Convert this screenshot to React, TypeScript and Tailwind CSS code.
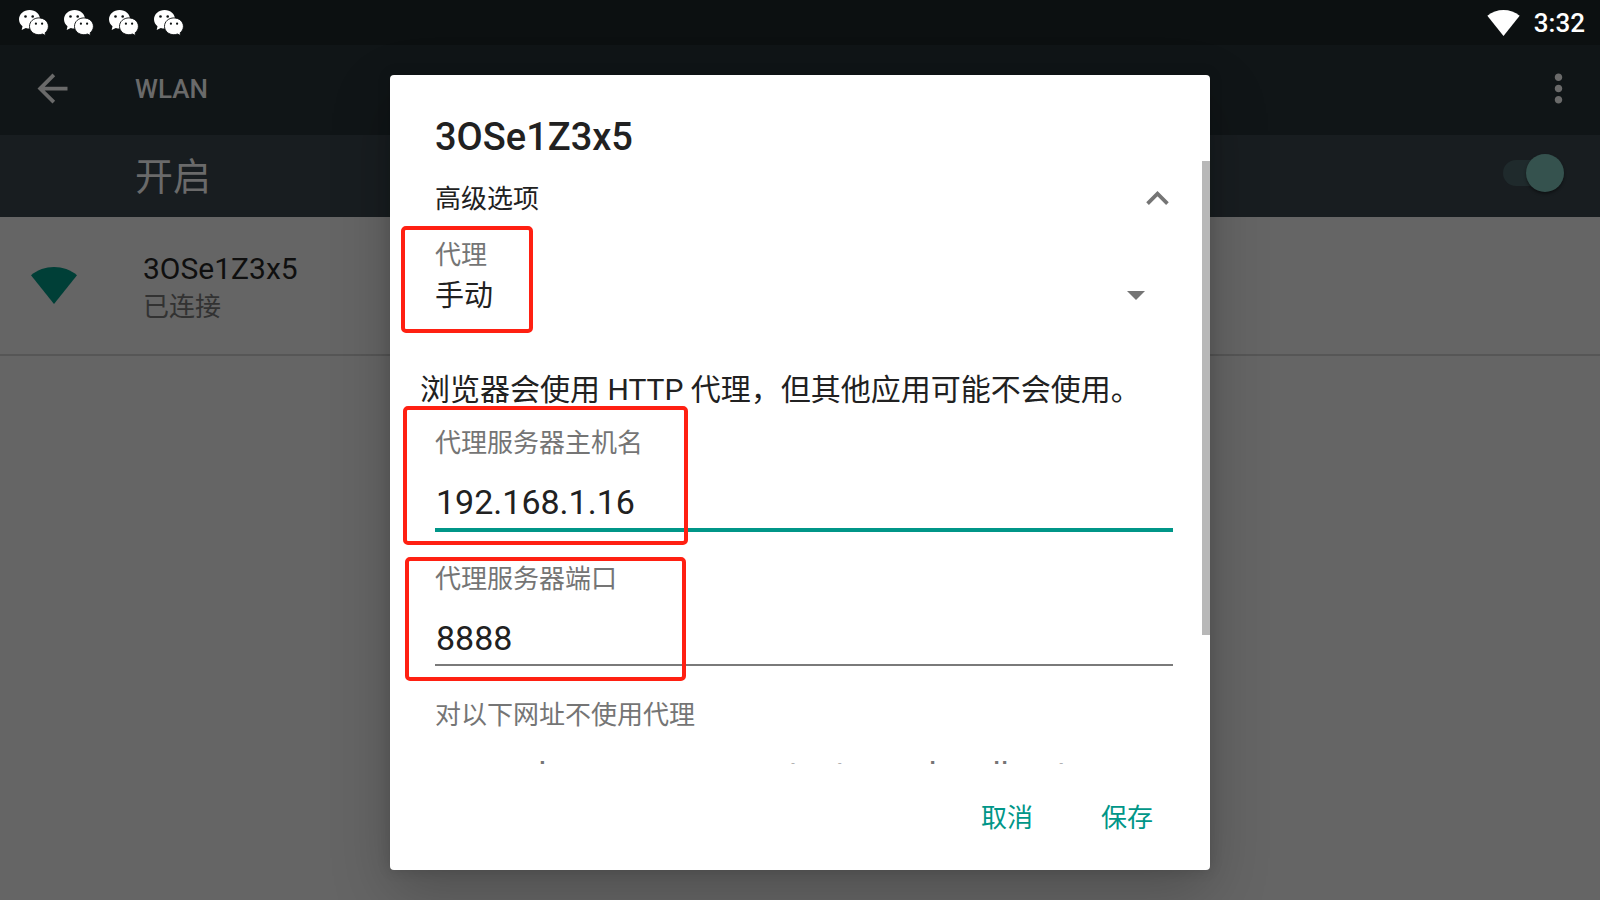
import { useState } from "react";

function WeChatIcon() {
  return (
    <svg viewBox="0 0 30 26" className="h-[26px] w-[30px]" aria-hidden="true">
      <path
        fill="#fff"
        d="M10.6 0C4.8 0 0 4.100 0 9.300c0 2.900 1.300 5.200 3.500 6.900L2.700 20l4.100-2c1.200.4 2.500.6 3.800.6 5.800 0 10.500-4.100 10.500-9.300S16.400 0 10.600 0z"
      />
      <path
        fill="#fff"
        stroke="#0c1011"
        strokeWidth="0.9"
        d="M19.900 7.900c-5.300 0-9.400 3.700-9.400 8.400s4.100 8.400 9.400 8.400c1.300 0 2.500-.3 3.600-.7l3.300 1.600-.7-2.800c2.100-1.600 3.300-3.800 3.300-6.500 0-4.700-4.200-8.400-9.500-8.400z"
      />
      <circle cx="6.500" cy="6.500" r="1.300" fill="#0c1011" />
      <circle cx="13.700" cy="6.500" r="1.300" fill="#0c1011" />
      <circle cx="16.900" cy="13.700" r="1.100" fill="#0c1011" />
      <circle cx="23.100" cy="13.700" r="1.100" fill="#0c1011" />
    </svg>
  );
}

function WifiIcon({ className }: { className: string }) {
  return (
    <svg viewBox="0 0 46 37" className={className} fill="currentColor" aria-hidden="true">
      <path d="M23 37L0 8.300C6.500 2.700 14.500 0 23 0s16.500 2.700 23 8.300z" />
    </svg>
  );
}

function Marker({ className }: { className: string }) {
  return (
    <div
      className={`pointer-events-none absolute rounded-[5px] border-4 border-[#ff2012] ${className}`}
      aria-hidden="true"
    />
  );
}

const labelClass = "block text-[26px] leading-[38px] text-[#757575]";
const inputClass =
  "block w-full bg-transparent pl-px text-[34px] leading-10 text-[#212121] outline-none placeholder:text-[#757575] placeholder:opacity-100";

export default function App() {
  const [enabled, setEnabled] = useState(true);
  const [proxy, setProxy] = useState("manual");
  const [host, setHost] = useState("192.168.1.16");
  const [port, setPort] = useState("8888");
  const [bypass, setBypass] = useState("");

  return (
    <div className="relative flex h-screen flex-col overflow-hidden bg-[#656565] font-[Roboto,'Noto_Sans_CJK_SC',sans-serif]">
      <div className="flex h-[45px] shrink-0 items-center justify-between bg-[#0c1011] pr-[15px] pl-[19px] text-white">
        <div className="flex gap-[15px]">
          <WeChatIcon />
          <WeChatIcon />
          <WeChatIcon />
          <WeChatIcon />
        </div>
        <div className="flex items-center gap-[14px]">
          <WifiIcon className="h-[26px] w-[33px]" />
          <span className="text-[26px] leading-[30px] font-medium">3:32</span>
        </div>
      </div>

      <header className="flex h-[90px] shrink-0 items-center bg-[#101517] pr-[19px] pb-[3px] pl-[30px] text-[#6a6a6a]">
        <button type="button" aria-label="返回">
          <svg viewBox="0 0 24 24" className="size-[45px]" fill="currentColor">
            <path d="M20 11H7.830l5.590-5.590L12 4l-8 8 8 8 1.410-1.410L7.830 13H20v-2z" />
          </svg>
        </button>
        <h1 className="ml-[60px] flex-1 text-[26px] leading-[30px] font-medium">WLAN</h1>
        <button type="button" aria-label="更多选项">
          <svg viewBox="0 0 24 24" className="size-[45px]" fill="currentColor">
            <path d="M12 8c1.100 0 2-.9 2-2s-.9-2-2-2-2 .9-2 2 .9 2 2 2zm0 2c-1.100 0-2 .9-2 2s.9 2 2 2 2-.9 2-2-.9-2-2-2zm0 6c-1.100 0-2 .9-2 2s.9 2 2 2 2-.9 2-2-.9-2-2-2z" />
          </svg>
        </button>
      </header>

      <div className="flex h-[82px] shrink-0 items-start justify-between bg-[#181d20] pr-9 pl-[135px] text-[#6a6a6a]">
        <label htmlFor="wlan" className="pt-[15px] text-[38px] leading-[54px]">
          开启
        </label>
        <input
          id="wlan"
          type="checkbox"
          role="switch"
          checked={enabled}
          onChange={(e) => setEnabled(e.target.checked)}
          className="mt-[25px] flex h-[26px] w-[61px] appearance-none items-center rounded-full bg-[#1f2a2c] before:block before:size-[38px] before:shrink-0 before:rounded-full before:bg-[#35524e] before:shadow-[0_2px_3px_rgba(0,0,0,0.4)] checked:justify-end"
        />
      </div>

      <main className="flex h-[139px] shrink-0 items-center border-b-2 border-[#565656]">
        <WifiIcon className="ml-[31px] h-[37px] w-[46px] text-[#003f37]" />
        <div className="ml-[66px] pt-1">
          <div className="text-[30px] leading-[38px] text-[#0f0f0f]">3OSe1Z3x5</div>
          <div className="text-[26px] leading-[38px] text-[#323232]">已连接</div>
        </div>
      </main>

      <div className="absolute inset-0 flex items-stretch justify-center pt-[75px] pb-[30px]">
        <section
          role="dialog"
          aria-labelledby="dialog-title"
          className="flex w-full max-w-[820px] flex-col rounded-[4px] bg-white text-[#212121] shadow-[0_22px_60px_rgba(0,0,0,0.22),0_0_14px_rgba(0,0,0,0.14)]"
        >
          <h2 id="dialog-title" className="px-[45px] pt-[39px] pb-px text-[38px] leading-[46px] font-medium">
            3OSe1Z3x5
          </h2>

          <div className="relative min-h-0 flex-1 overflow-hidden">
            <button
              type="button"
              className="flex w-full items-center justify-between pt-[19px] pr-[30px] pl-[45px] text-[26px] leading-[38px]"
            >
              高级选项
              <svg viewBox="0 0 24 24" className="-mt-[5px] -mb-[3px] size-[45px]" aria-hidden="true">
                <path d="M6.700 14.700L12 9.400l5.300 5.300" fill="none" stroke="#757575" strokeWidth="2" />
              </svg>
            </button>

            <div className="relative mt-[18px] pr-[37px] pl-[45px]">
              <label htmlFor="proxy" className={labelClass}>
                代理
              </label>
              <div className="relative">
                <select
                  id="proxy"
                  value={proxy}
                  onChange={(e) => setProxy(e.target.value)}
                  className="block w-full appearance-none bg-transparent text-[29px] leading-[44px] outline-none"
                >
                  <option value="none">无</option>
                  <option value="manual">手动</option>
                </select>
                <svg
                  viewBox="0 0 18 9"
                  className="pointer-events-none absolute top-[17px] right-7 h-[9px] w-[18px]"
                  aria-hidden="true"
                >
                  <path d="M0 0h18L9 9z" fill="#757575" />
                </svg>
              </div>
              <Marker className="-top-[10px] left-[11px] h-[107px] w-[132px]" />
            </div>

            <p className="mt-[50px] px-[30px] text-[30px] leading-[44px]">
              浏览器会使用 HTTP 代理，但其他应用可能不会使用。
            </p>

            <div className="relative mt-[12px] pr-[37px] pl-[45px]">
              <label htmlFor="host" className={labelClass}>
                代理服务器主机名
              </label>
              <div className="mt-5 border-b-4 border-[#009688] pb-1.5">
                <input
                  id="host"
                  value={host}
                  onChange={(e) => setHost(e.target.value)}
                  className={inputClass}
                />
              </div>
              <Marker className="-top-[18px] left-[13px] h-[139px] w-[285px]" />
            </div>

            <div className="relative mt-[28px] pr-[37px] pl-[45px]">
              <label htmlFor="port" className={labelClass}>
                代理服务器端口
              </label>
              <div className="mt-5 border-b-2 border-[#7a7a7a] pb-1.5">
                <input
                  id="port"
                  value={port}
                  onChange={(e) => setPort(e.target.value)}
                  className={inputClass}
                />
              </div>
              <Marker className="-top-[3px] left-[15px] h-[124px] w-[281px]" />
            </div>

            <div className="mt-[30px] pr-[37px] pl-[45px]">
              <label htmlFor="bypass" className={labelClass}>
                对以下网址不使用代理
              </label>
              <div className="mt-5 border-b-2 border-[#7a7a7a] pb-1.5">
                <input
                  id="bypass"
                  value={bypass}
                  onChange={(e) => setBypass(e.target.value)}
                  placeholder="example.com,mycomp.test.com,localhost"
                  className={inputClass}
                />
              </div>
            </div>

            <div className="absolute top-0 right-0 h-[474px] w-2 bg-[#b8b8b8]" aria-hidden="true" />
          </div>

          <div className="flex h-[106px] shrink-0 items-center justify-end gap-[68px] pt-0.5 pr-[57px] text-[26px] leading-[38px] text-[#009688]">
            <button type="button">取消</button>
            <button type="button">保存</button>
          </div>
        </section>
      </div>
    </div>
  );
}
